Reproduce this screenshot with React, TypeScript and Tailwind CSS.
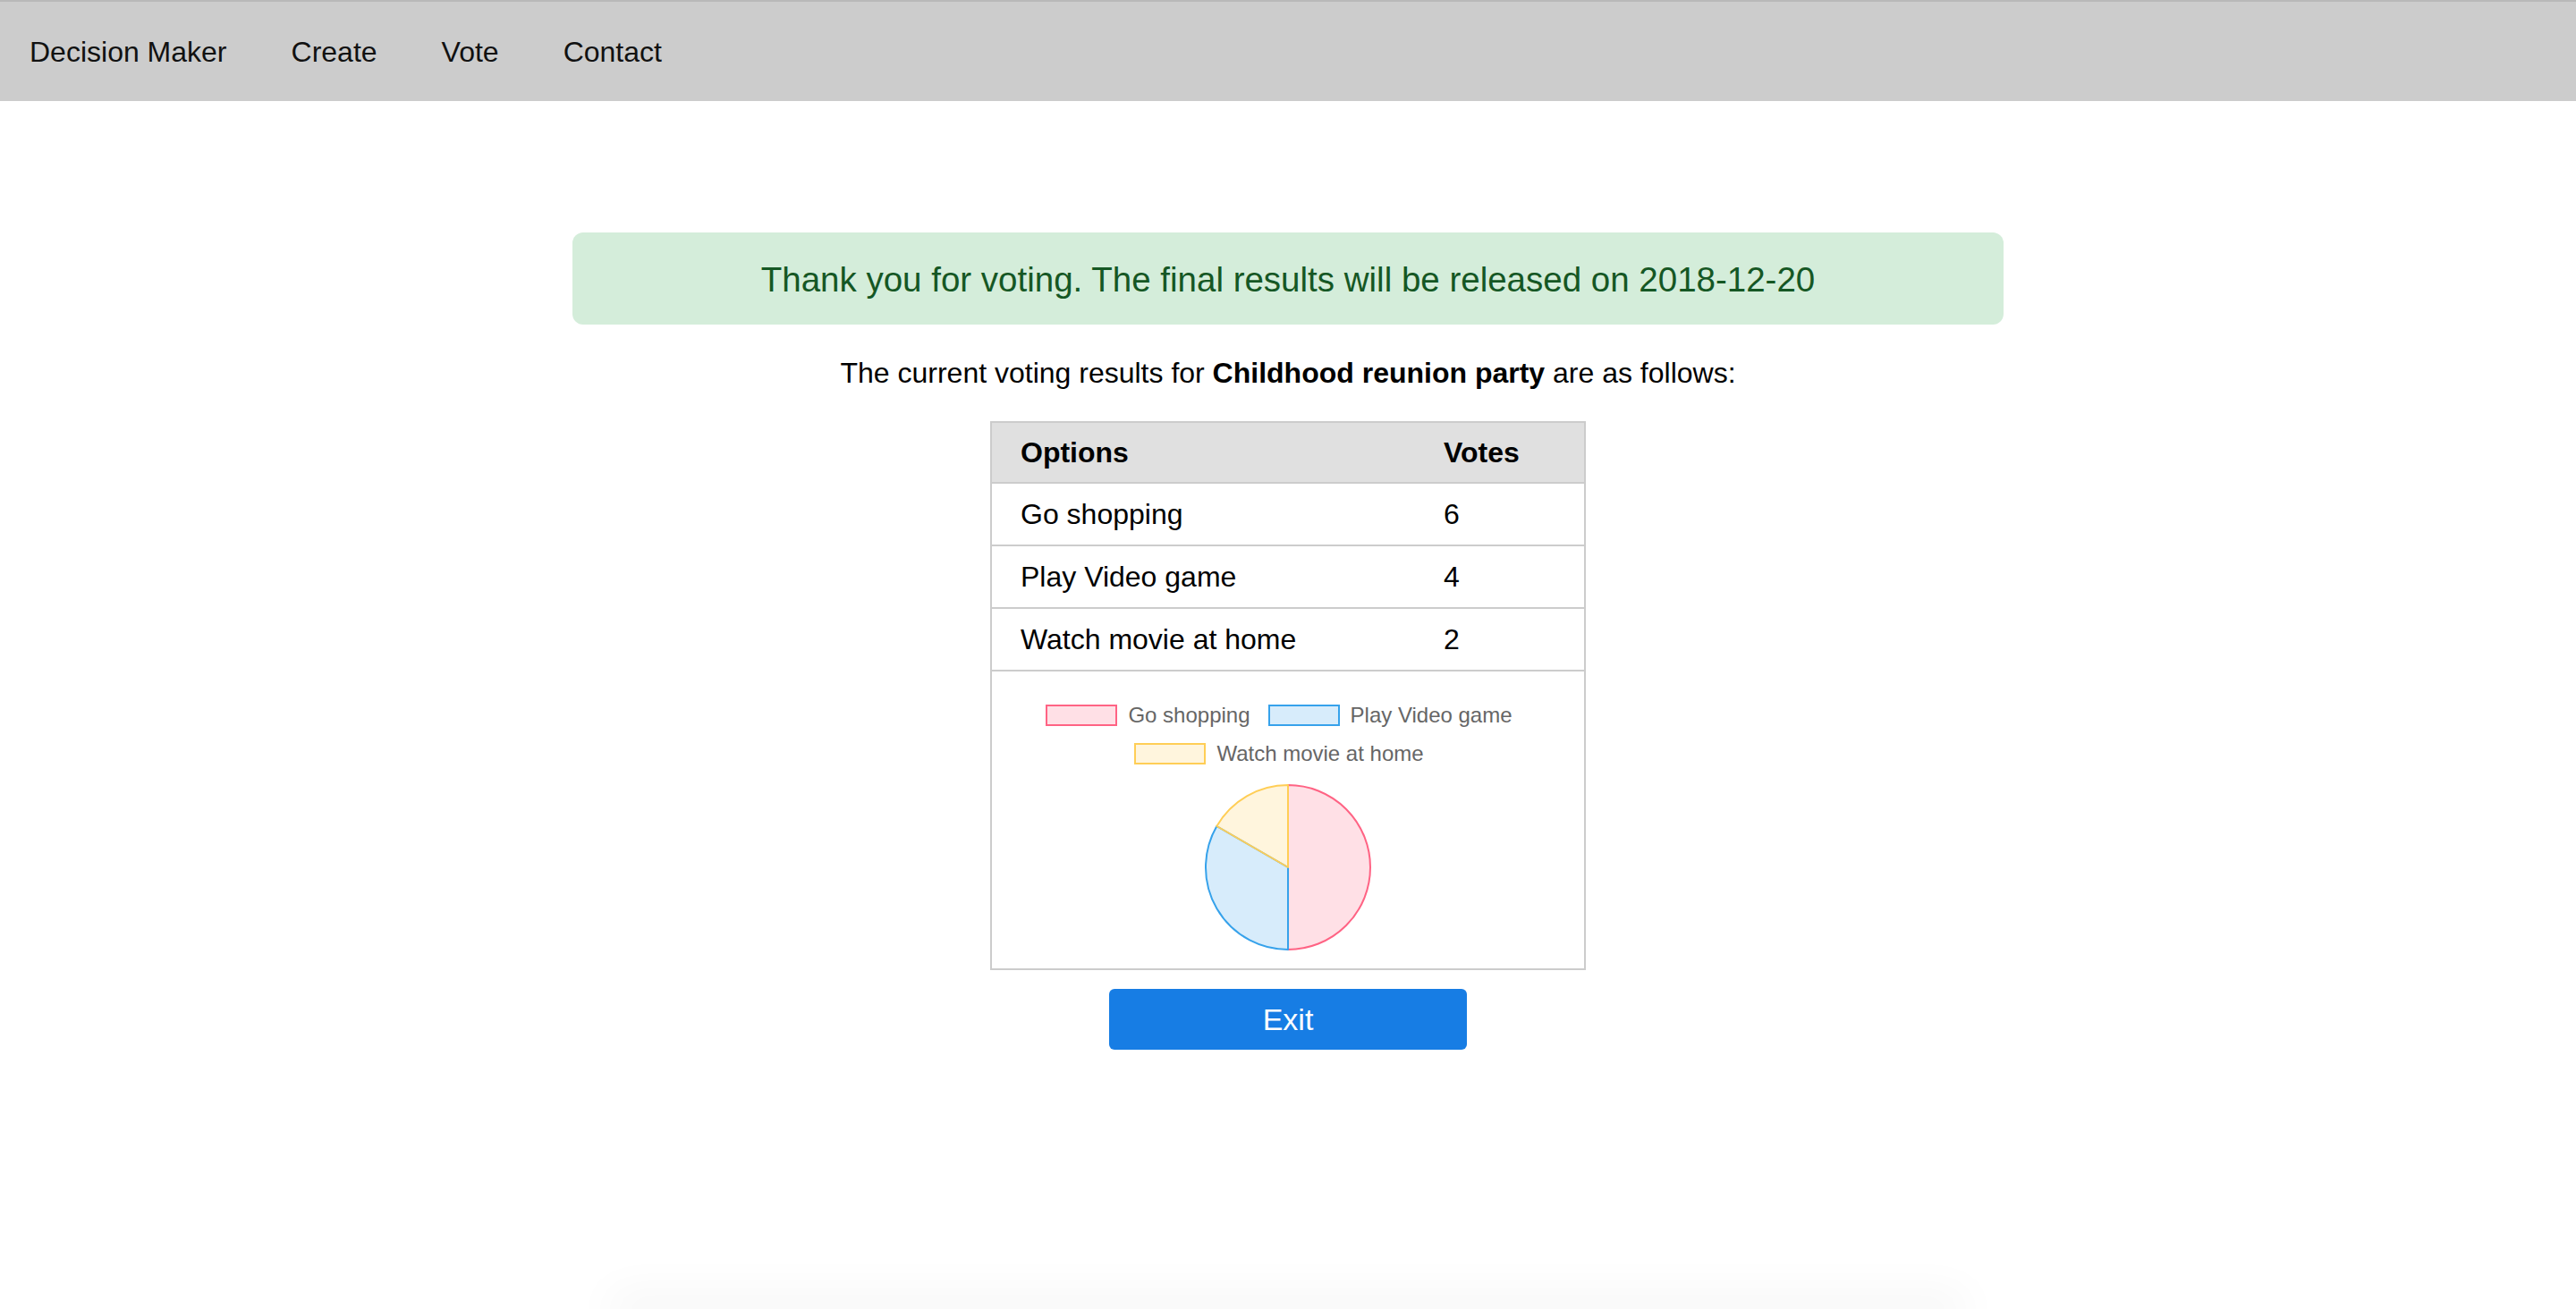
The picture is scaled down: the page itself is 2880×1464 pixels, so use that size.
import React from "react";

const rows = [
  { name: "Go shopping", votes: 6 },
  { name: "Play Video game", votes: 4 },
  { name: "Watch movie at home", votes: 2 },
];

function polar(cx: number, cy: number, r: number, deg: number) {
  const a = ((deg - 90) * Math.PI) / 180;
  return [cx + r * Math.cos(a), cy + r * Math.sin(a)];
}

function slice(cx: number, cy: number, r: number, a0: number, a1: number) {
  const [x0, y0] = polar(cx, cy, r, a0);
  const [x1, y1] = polar(cx, cy, r, a1);
  const large = a1 - a0 > 180 ? 1 : 0;
  return `M ${cx} ${cy} L ${x0} ${y0} A ${r} ${r} 0 ${large} 1 ${x1} ${y1} Z`;
}

function Pie() {
  const cx = 95, cy = 95, r = 92;
  return (
    <svg width="190" height="190" viewBox="0 0 190 190">
      <path d={slice(cx, cy, r, 0, 180)} fill="rgba(255,99,132,0.2)" stroke="rgb(255,99,132)" strokeWidth="2" strokeLinejoin="round" />
      <path d={slice(cx, cy, r, 180, 300)} fill="rgba(54,162,235,0.2)" stroke="rgb(54,162,235)" strokeWidth="2" strokeLinejoin="round" />
      <path d={slice(cx, cy, r, 300, 360)} fill="rgba(255,206,86,0.2)" stroke="rgb(255,206,86)" strokeWidth="2" strokeLinejoin="round" />
    </svg>
  );
}

function LegendItem({ label, fill, stroke }: { label: string; fill: string; stroke: string }) {
  return (
    <div className="flex items-center mr-[20px]">
      <span className={`block w-[80px] h-[24px] border-2 ${fill} ${stroke}`} />
      <span className="ml-[12px] text-[24px] leading-[24px] text-[#666666]">{label}</span>
    </div>
  );
}

export default function App() {
  return (
    <div
      className="h-screen w-full overflow-hidden bg-white flex flex-col text-black"
      style={{ fontFamily: '"Liberation Sans", Arial, Helvetica, sans-serif' }}
    >
      <nav className="h-[113px] shrink-0 bg-[#cccccc] border-t-2 border-[#b8b8b8] flex items-center pl-[33px] gap-[72px] text-[32px] text-[#111111]">
        <span>Decision Maker</span>
        <span>Create</span>
        <span>Vote</span>
        <span>Contact</span>
      </nav>

      <main className="flex flex-col items-center">
        <div className="mt-[147px] w-[1600px] h-[103px] rounded-[12px] bg-[#d4edda] text-[#155724] flex items-center justify-center pt-[2px] text-[38.5px]">
          Thank you for voting. The final results will be released on 2018-12-20
        </div>

        <p className="mt-[36px] text-[32px] leading-[36px]">
          The current voting results for <b>Childhood reunion party</b> are as follows:
        </p>

        <div className="mt-[36px] w-[666px] border-2 border-[#cccccc]">
          <div className="grid grid-cols-[473px_1fr] h-[68px] items-center bg-[#e0e0e0] text-[32px] font-bold border-b-2 border-[#cccccc]">
            <span className="pl-[32px]">Options</span>
            <span className="pl-[32px]">Votes</span>
          </div>
          {rows.map((r) => (
            <div
              key={r.name}
              className="grid grid-cols-[473px_1fr] h-[70px] items-center text-[32px] border-b-2 border-[#cccccc]"
            >
              <span className="pl-[32px]">{r.name}</span>
              <span className="pl-[32px]">{r.votes}</span>
            </div>
          ))}
          <div className="h-[332px] flex flex-col items-center pt-[37px]">
            <div className="flex justify-center">
              <LegendItem label="Go shopping" fill="bg-[rgba(255,99,132,0.2)]" stroke="border-[rgb(255,99,132)]" />
              <LegendItem label="Play Video game" fill="bg-[rgba(54,162,235,0.2)]" stroke="border-[rgb(54,162,235)]" />
            </div>
            <div className="flex justify-center mt-[19px]">
              <LegendItem label="Watch movie at home" fill="bg-[rgba(255,206,86,0.2)]" stroke="border-[rgb(255,206,86)]" />
            </div>
            <div className="mt-[20px]">
              <Pie />
            </div>
          </div>
        </div>

        <button className="mt-[21px] w-[400px] h-[68px] rounded-[6px] bg-[#177de4] text-white text-[34px]">
          Exit
        </button>
      </main>

      <div className="mt-auto mx-auto w-[1480px] h-0 shrink-0 shadow-[0_0_50px_18px_rgba(0,0,0,0.045)]" />
    </div>
  );
}
